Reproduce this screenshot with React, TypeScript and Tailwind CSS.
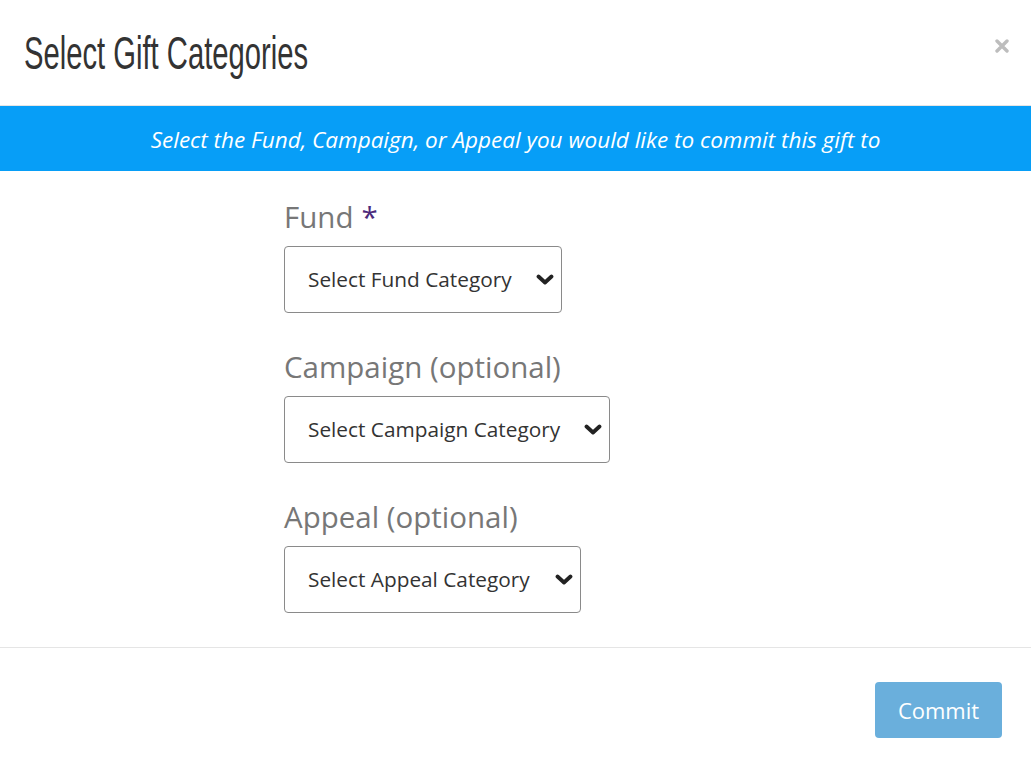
type Field = { label: string; placeholder: string; required?: boolean; width: string };

const FIELDS: Field[] = [
  { label: "Fund", placeholder: "Select Fund Category", required: true, width: "w-[278px]" },
  { label: "Campaign (optional)", placeholder: "Select Campaign Category", width: "w-[326px]" },
  { label: "Appeal (optional)", placeholder: "Select Appeal Category", width: "w-[297px]" },
];

function Chevron() {
  return (
    <svg width="18" height="12" viewBox="0 0 18 12" className="text-[#222222]">
      <polyline points="2.5,2.5 9,8.5 15.5,2.5" fill="none" stroke="currentColor" strokeWidth="3.8" strokeLinecap="round" strokeLinejoin="round" />
    </svg>
  );
}

function CategorySelect({ field }: { field: Field }) {
  return (
    <div className="flex flex-col">
      <label className="text-[29.5px] leading-[40px] text-[#777777]">
        {field.label}
        {field.required && <span className="ml-2 text-[#4b2a7b]">*</span>}
      </label>
      <div
        className={`${field.width} mt-[9px] h-[67px] flex items-center justify-between pl-[23px] pr-[7px] border border-[#8a8a8a] rounded-[4px] bg-white`}
      >
        <span className="text-[20.8px] text-[#333333]">{field.placeholder}</span>
        <Chevron />
      </div>
    </div>
  );
}

export default function App() {
  return (
    <div className="w-[1031px] h-[762px] bg-white flex flex-col font-['Open_Sans',sans-serif]">
      {/* Header */}
      <header className="h-[106px] flex items-start justify-between pl-[24px] pr-[22px] border-b border-[#e5e5e5] flex-shrink-0">
        <h1 className="mt-[25px] text-[46px] leading-[56px] text-[#333333] origin-left scale-x-[0.635] whitespace-nowrap font-['Liberation_Sans',sans-serif]">
          Select Gift Categories
        </h1>
        <button className="mt-[39px] text-[#bdbdbd]">
          <svg width="14" height="14" viewBox="0 0 14 14">
            <path d="M2 2 L12 12 M12 2 L2 12" stroke="currentColor" strokeWidth="3.4" strokeLinecap="round" />
          </svg>
        </button>
      </header>

      {/* Info banner */}
      <div className="h-[65px] bg-[#079ef7] flex items-center justify-center flex-shrink-0">
        <p className="italic text-white text-[22.5px] mt-[3px]">
          Select the Fund, Campaign, or Appeal you would like to commit this gift to
        </p>
      </div>

      {/* Form */}
      <div className="flex-1 flex flex-col gap-[34px] pl-[284px] pt-[26px]">
        {FIELDS.map((f) => (
          <CategorySelect key={f.label} field={f} />
        ))}
      </div>

      {/* Footer */}
      <footer className="h-[115px] border-t border-[#e5e5e5] flex items-start justify-end pr-[29px] pt-[34px] flex-shrink-0">
        <button className="w-[127px] h-[56px] rounded-[4px] bg-[#6aafdc] text-white text-[22px]">
          Commit
        </button>
      </footer>
    </div>
  );
}
